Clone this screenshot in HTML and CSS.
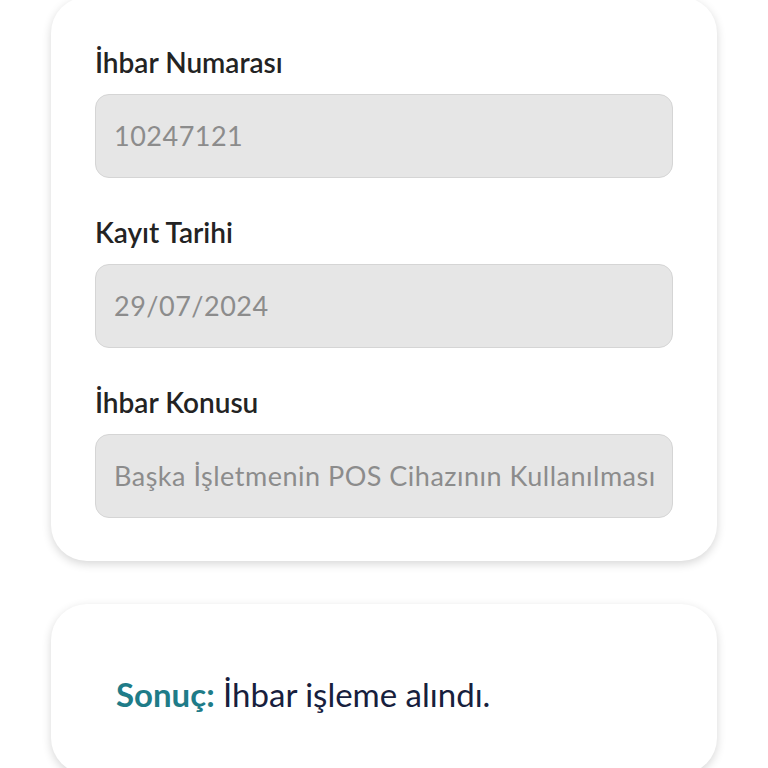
FILE: index.html
```html
<!DOCTYPE html>
<html lang="tr">
<head>
    <meta charset="UTF-8">
    <title>İhbar Detayı</title>
    <link rel="stylesheet" href="styles.css">
</head>
<body>
    <div class="page">
        <div class="card details">
            <div class="field">
                <label>İhbar Numarası</label>
                <div class="input"><span>10247121</span></div>
            </div>
            <div class="field">
                <label>Kayıt Tarihi</label>
                <div class="input"><span>29/07/2024</span></div>
            </div>
            <div class="field">
                <label>İhbar Konusu</label>
                <div class="input"><span>Başka İşletmenin POS Cihazının Kullanılması</span></div>
            </div>
        </div>

        <div class="card result">
            <p><span class="result-label">Sonuç:</span> İhbar işleme alındı.</p>
        </div>
    </div>
</body>
</html>
```

FILE: styles.css
```css
body {
    font-family: Lato, "Open Sans", sans-serif;
    margin: 0;
    background: #fff;
    overflow: hidden;
}
.page {
    padding: 0 51px;
    margin-top: -3px;
}
.card {
    background: white;
    border-radius: 36px;
    box-shadow: 0 3px 10px rgba(0,0,0,0.16);
}
.details {
    padding: 48px 44px 43px;
}
.field {
    margin-bottom: 37px;
}
.field:last-child {
    margin-bottom: 0;
}
label {
    display: block;
    font-size: 28px;
    line-height: 34px;
    font-weight: 600;
    color: #232323;
    margin-bottom: 15px;
}
.input {
    height: 82px;
    line-height: 82px;
    padding: 0 18px;
    background: #e6e6e6;
    border: 1px solid #d5d5d5;
    border-radius: 14px;
    font-size: 27px;
    letter-spacing: 0.5px;
    color: #8c8c8c;
}
.input span {
    display: block;
    white-space: nowrap;
    overflow: hidden;
}
.result {
    margin-top: 43px;
    padding: 70px 65px 60px;
}
.result p {
    margin: 0;
    font-size: 33px;
    line-height: 40px;
    color: #17203d;
}
.result-label {
    color: #1f7c88;
    font-weight: 700;
}
```
